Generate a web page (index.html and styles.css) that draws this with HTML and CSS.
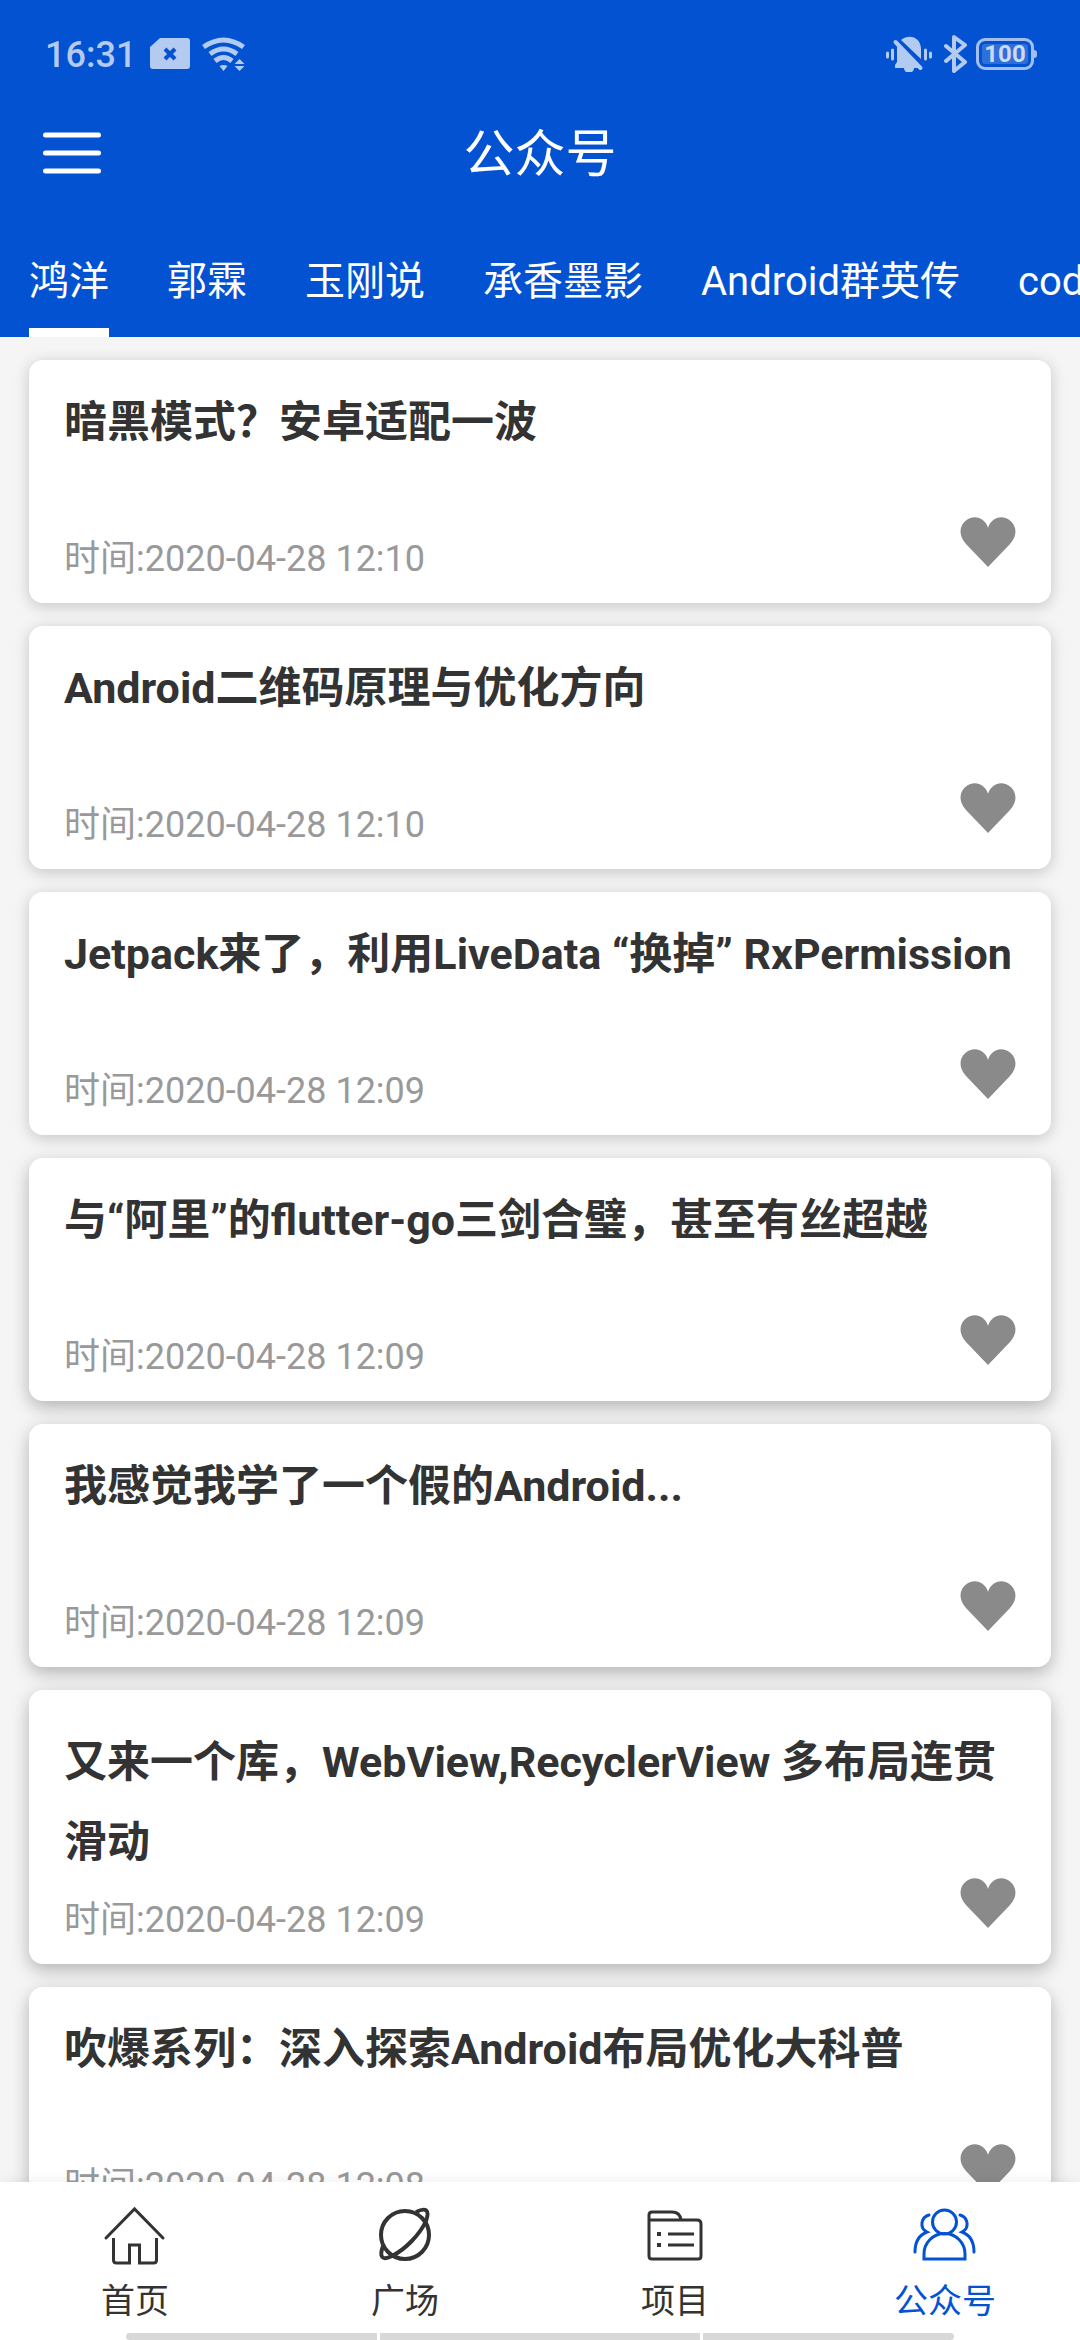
FILE: index.html
```html
<!DOCTYPE html>
<html lang="zh-CN">
<head>
<meta charset="utf-8">
<meta name="viewport" content="width=device-width, initial-scale=1">
<title>公众号</title>
<link rel="stylesheet" href="styles.css">
</head>
<body>
<svg class="defs" width="0" height="0" aria-hidden="true">
  <symbol id="heart" viewBox="0 0 56 50">
    <path d="M28 50 6 27C-8 11 8-3 19 1c5 2 8 6 9 10 1-4 4-8 9-10 11-4 27 10 13 26z"/>
  </symbol>
</svg>

<header class="header">
  <div class="status">
    <span class="status-time">16:31</span>
    <svg class="icon-sim" width="40" height="32" viewBox="0 0 40 32" aria-hidden="true">
      <path d="M10 0h27q3 0 3 3v25q0 3-3 3H3q-3 0-3-3V9z" fill="currentColor"/>
      <path d="m15 11 10 10M25 11 15 21" stroke="#0352d2" stroke-width="4"/>
    </svg>
    <svg class="icon-wifi" width="43" height="34" viewBox="0 0 43 34" fill="none" stroke="currentColor" stroke-width="5" aria-hidden="true">
      <path d="M1.500 10Q21.500 -4 41.500 10M8 17Q21.500 7 35 17M13 24Q21.500 17 30 24"/>
      <path d="M17.500 29q4-2 8 0l-4 5zM32.500 27l5-5 5 5zM32.500 29l5 5 5-5z" fill="currentColor" stroke="none"/>
    </svg>
    <span class="status-space"></span>
    <svg class="icon-bell" width="46" height="36" viewBox="0 0 46 36" aria-hidden="true">
      <path d="M11 7 36 32H28a5 5 0 0 1-10 0H9v-3l2-3zM15 4C24-3 35 2 35 13V23z" fill="currentColor"/>
      <path d="M9.500 6 34.500 32" stroke="currentColor" stroke-width="4" stroke-linecap="round"/>
      <path d="M1.500 17v4M6.500 14v9M39.500 14v9M44.500 17v4" stroke="currentColor" stroke-width="3" stroke-linecap="round"/>
    </svg>
    <svg class="icon-bt" width="24" height="40" viewBox="0 0 24 40" fill="none" stroke="currentColor" stroke-width="4" stroke-linejoin="round" stroke-linecap="round" aria-hidden="true">
      <path d="M2 12 21 28l-11 9V3l11 8L2 27"/>
    </svg>
    <span class="battery">100</span>
  </div>
  <div class="bar">
    <button class="menu" type="button" aria-label="菜单">
      <svg width="58" height="42" viewBox="0 0 58 42" stroke="#fff" stroke-width="5" stroke-linecap="round" aria-hidden="true">
        <path d="M2.500 3h53M2.500 21h53M2.500 39h53"/>
      </svg>
    </button>
    <h1 class="bar-title">公众号</h1>
  </div>
  <nav class="tabs">
    <a class="tab tab-active" href="#">鸿洋</a>
    <a class="tab" href="#">郭霖</a>
    <a class="tab" href="#">玉刚说</a>
    <a class="tab" href="#">承香墨影</a>
    <a class="tab" href="#">Android群英传</a>
    <a class="tab" href="#">code小生</a>
  </nav>
</header>

<main class="list">
  <article class="card">
    <h2 class="card-title">暗黑模式？安卓适配一波</h2>
    <p class="card-date">时间:2020-04-28 12:10</p>
    <button class="like" type="button" aria-label="收藏"><svg width="56" height="50"><use href="#heart"/></svg></button>
  </article>
  <article class="card">
    <h2 class="card-title">Android二维码原理与优化方向</h2>
    <p class="card-date">时间:2020-04-28 12:10</p>
    <button class="like" type="button" aria-label="收藏"><svg width="56" height="50"><use href="#heart"/></svg></button>
  </article>
  <article class="card">
    <h2 class="card-title">Jetpack来了，利用LiveData “换掉” RxPermission</h2>
    <p class="card-date">时间:2020-04-28 12:09</p>
    <button class="like" type="button" aria-label="收藏"><svg width="56" height="50"><use href="#heart"/></svg></button>
  </article>
  <article class="card">
    <h2 class="card-title">与“阿里”的flutter-go三剑合璧，甚至有丝超越</h2>
    <p class="card-date">时间:2020-04-28 12:09</p>
    <button class="like" type="button" aria-label="收藏"><svg width="56" height="50"><use href="#heart"/></svg></button>
  </article>
  <article class="card">
    <h2 class="card-title">我感觉我学了一个假的Android...</h2>
    <p class="card-date">时间:2020-04-28 12:09</p>
    <button class="like" type="button" aria-label="收藏"><svg width="56" height="50"><use href="#heart"/></svg></button>
  </article>
  <article class="card card-long">
    <h2 class="card-title">又来一个库，WebView,RecyclerView 多布局连贯滑动</h2>
    <p class="card-date">时间:2020-04-28 12:09</p>
    <button class="like" type="button" aria-label="收藏"><svg width="56" height="50"><use href="#heart"/></svg></button>
  </article>
  <article class="card">
    <h2 class="card-title">吹爆系列：深入探索Android布局优化大科普</h2>
    <p class="card-date">时间:2020-04-28 12:08</p>
    <button class="like" type="button" aria-label="收藏"><svg width="56" height="50"><use href="#heart"/></svg></button>
  </article>
</main>

<footer class="footer">
  <nav class="nav">
    <a class="nav-item" href="#">
      <svg width="64" height="60" viewBox="0 0 64 60" fill="none" stroke="currentColor" stroke-width="3" stroke-linecap="round" aria-hidden="true">
        <path d="M3 32 31.500 3 60 32"/>
        <path d="M10.500 32v22q0 3 3 3h13V39h10v18h14q3 0 3-3V32" stroke-linecap="butt"/>
      </svg>
      <span>首页</span>
    </a>
    <a class="nav-item" href="#">
      <svg width="64" height="60" viewBox="0 0 64 60" fill="none" stroke="currentColor" stroke-width="4" aria-hidden="true">
        <circle cx="32" cy="29" r="24"/>
        <path d="M43 6c10-5 14-2 10 9C47 28 33 43 19 50c-10 5-13 1-9-10"/>
      </svg>
      <span>广场</span>
    </a>
    <a class="nav-item" href="#">
      <svg width="64" height="60" viewBox="0 0 64 60" fill="none" stroke="currentColor" stroke-width="3" aria-hidden="true">
        <path d="M6 14h48q4 0 4 4v32q0 3-3 3H9q-3 0-3-3V9q0-3 3-3h20q8 0 9 8M25 28h26M25 39h26"/>
        <path d="M14 26h4v4h-4zM14 37h4v4h-4z" fill="currentColor" stroke="none"/>
      </svg>
      <span>项目</span>
    </a>
    <a class="nav-item nav-active" href="#">
      <svg width="64" height="60" viewBox="0 0 64 60" fill="none" stroke="currentColor" stroke-width="3" stroke-linecap="round" aria-hidden="true">
        <circle cx="31.500" cy="16" r="12"/>
        <path d="M11 53v-5a20.500 20.500 0 0 1 41 0v5zM16 9C8 11 6 22 14 26 6 29 2 36 2 46M47 9c8 2 10 13 2 17 8 3 12 10 12 20"/>
      </svg>
      <span>公众号</span>
    </a>
  </nav>
  <div class="gesture"><i></i><i class="gesture-mid"></i><i></i></div>
</footer>
</body>
</html>
```
FILE: styles.css
```css
* { box-sizing: border-box; }

body {
  margin: 0;
  height: 100vh;
  display: flex;
  flex-direction: column;
  overflow: hidden;
  background: #f5f5f5;
  color: #333;
  font-family: Roboto, "Noto Sans CJK SC", sans-serif;
}

h1, h2, p { margin: 0; font-weight: 400; }
a { color: inherit; text-decoration: none; }
button { padding: 0; border: 0; background: none; color: inherit; }
svg { display: block; flex: none; }
.defs { position: absolute; }

.header { flex: none; background: #0352d2; color: #fff; }

.status {
  display: flex;
  align-items: center;
  height: 108px;
  padding: 0 46px 0 45px;
  color: #b3caf1;
}
.status-time { padding-top: 2px; font-size: 36px; font-weight: 500; }
.icon-sim { margin-left: 14px; }
.icon-wifi { margin-left: 12px; }
.status-space { flex: 1; }
.icon-bt { margin: 0 8px 0 12px; }
.battery {
  position: relative;
  width: 58px;
  height: 32px;
  border: 3px solid #a3bff0;
  border-radius: 9px;
  background: #2f6fda;
  box-shadow: inset 0 0 0 3px #0352d2;
  color: #cbdbf6;
  font-size: 24px;
  font-weight: 700;
  line-height: 27px;
  text-align: center;
}
.battery::after {
  content: "";
  position: absolute;
  top: 9px;
  right: -6px;
  width: 3px;
  height: 8px;
  border-radius: 0 3px 3px 0;
  background: #a3bff0;
}

.bar {
  display: grid;
  grid-template-columns: 100px 1fr 100px;
  align-items: center;
  height: 90px;
  padding: 0 43px;
}
.bar-title { padding-top: 4px; font-size: 51px; line-height: 60px; text-align: center; }

.tabs {
  display: flex;
  gap: 58px;
  height: 139px;
  padding: 28px 29px 0;
  overflow: hidden;
}
.tab {
  flex: none;
  padding-top: 26px;
  font-size: 40px;
  line-height: 60px;
  white-space: nowrap;
}
.tab-active { border-bottom: 9px solid #fff; }

.list {
  flex: 1;
  min-height: 0;
  display: flex;
  flex-direction: column;
  gap: 23px;
  padding: 23px 29px 0;
  overflow: hidden;
}
.card {
  flex: none;
  display: grid;
  grid-template-columns: 1fr 56px;
  grid-template-rows: 1fr 50px;
  row-gap: 12px;
  min-height: 243px;
  padding: 22px 35px 20px;
  border-radius: 14px;
  background: #fff;
  box-shadow: 0 3px 16px rgba(0, 0, 0, .2);
}
.card:nth-child(n+4) { box-shadow: 0 6px 18px rgba(0, 0, 0, .27); }
.card-long { padding-top: 32px; }
.card-title {
  grid-column: 1 / 3;
  font-size: 43px;
  font-weight: 700;
  line-height: 80px;
}
.card-date { color: #999; font-size: 36px; line-height: 52px; }
.like { align-self: end; color: #8a8a8a; margin-bottom: 16px; }
.like svg { fill: currentColor; }

.footer {
  flex: none;
  position: relative;
  background: #fff;
  box-shadow: 0 -2px 12px rgba(0, 0, 0, .06);
}
.nav { display: grid; grid-template-columns: repeat(4, 1fr); height: 151px; }
.nav-item {
  display: flex;
  flex-direction: column;
  align-items: center;
  gap: 10px;
  padding-top: 24px;
  font-size: 34px;
  line-height: 50px;
}
.nav-active { color: #0352d2; }
.gesture { display: flex; gap: 3px; height: 7px; padding: 0 126px; }
.gesture i { flex: 251; background: #d8d8d8; }
.gesture .gesture-mid { flex: 320; }
.gesture i:first-child { border-radius: 4px 0 0 4px; }
.gesture i:last-child { border-radius: 0 4px 4px 0; }
```
